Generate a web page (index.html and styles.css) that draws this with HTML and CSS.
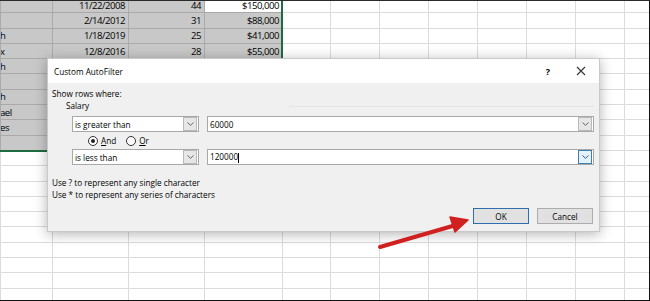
FILE: index.html
```html
<!DOCTYPE html>
<html>
    <head>
        <meta charset="UTF-8">
        <title>Custom AutoFilter</title>
        <link rel="stylesheet" href="styles.css">
    </head>
    <body>
        <div class="frame">
            <!--工作表-->
            <table class="sheet">
                <colgroup>
                    <col class="ca"><col class="cb"><col class="cb"><col class="cd"><col class="ce">
                    <col class="cx"><col class="cx"><col class="cx"><col class="cx"><col class="cx"><col class="cx"><col class="cx">
                </colgroup>
                <tr class="sel"><td></td><td class="num">11/22/2008</td><td class="num">44</td><td class="num cur">$150,000</td><td></td><td></td><td></td><td></td><td></td><td></td><td></td><td></td></tr>
                <tr class="sel"><td></td><td class="num">2/14/2012</td><td class="num">31</td><td class="num">$88,000</td><td></td><td></td><td></td><td></td><td></td><td></td><td></td><td></td></tr>
                <tr class="sel"><td class="name">h</td><td class="num">1/18/2019</td><td class="num">25</td><td class="num">$41,000</td><td></td><td></td><td></td><td></td><td></td><td></td><td></td><td></td></tr>
                <tr class="sel"><td class="name">x</td><td class="num">12/8/2016</td><td class="num">28</td><td class="num">$55,000</td><td></td><td></td><td></td><td></td><td></td><td></td><td></td><td></td></tr>
                <tr class="sel"><td class="name">h</td><td></td><td></td><td></td><td></td><td></td><td></td><td></td><td></td><td></td><td></td><td></td></tr>
                <tr class="sel"><td></td><td></td><td></td><td></td><td></td><td></td><td></td><td></td><td></td><td></td><td></td><td></td></tr>
                <tr class="sel"><td class="name">h</td><td></td><td></td><td></td><td></td><td></td><td></td><td></td><td></td><td></td><td></td><td></td></tr>
                <tr class="sel"><td class="name">ael</td><td></td><td></td><td></td><td></td><td></td><td></td><td></td><td></td><td></td><td></td><td></td></tr>
                <tr class="sel"><td class="name">es</td><td></td><td></td><td></td><td></td><td></td><td></td><td></td><td></td><td></td><td></td><td></td></tr>
                <tr class="sel"><td></td><td></td><td></td><td></td><td></td><td></td><td></td><td></td><td></td><td></td><td></td><td></td></tr>
                <tr><td></td><td></td><td></td><td></td><td></td><td></td><td></td><td></td><td></td><td></td><td></td><td></td></tr>
                <tr><td></td><td></td><td></td><td></td><td></td><td></td><td></td><td></td><td></td><td></td><td></td><td></td></tr>
                <tr><td></td><td></td><td></td><td></td><td></td><td></td><td></td><td></td><td></td><td></td><td></td><td></td></tr>
                <tr><td></td><td></td><td></td><td></td><td></td><td></td><td></td><td></td><td></td><td></td><td></td><td></td></tr>
                <tr><td></td><td></td><td></td><td></td><td></td><td></td><td></td><td></td><td></td><td></td><td></td><td></td></tr>
                <tr><td></td><td></td><td></td><td></td><td></td><td></td><td></td><td></td><td></td><td></td><td></td><td></td></tr>
                <tr><td></td><td></td><td></td><td></td><td></td><td></td><td></td><td></td><td></td><td></td><td></td><td></td></tr>
                <tr><td></td><td></td><td></td><td></td><td></td><td></td><td></td><td></td><td></td><td></td><td></td><td></td></tr>
                <tr><td></td><td></td><td></td><td></td><td></td><td></td><td></td><td></td><td></td><td></td><td></td><td></td></tr>
                <tr><td></td><td></td><td></td><td></td><td></td><td></td><td></td><td></td><td></td><td></td><td></td><td></td></tr>
            </table>
            <!--选区边框-->
            <div class="selbox"></div>

            <!--自定义筛选对话框-->
            <div class="dialog">
                <div class="titlebar">
                    <span class="title">Custom AutoFilter</span>
                    <span class="help">?</span>
                    <span class="close">
                        <svg width="10" height="10" viewBox="0 0 10 10"><path d="M1 1L9 9M9 1L1 9" stroke="#333" stroke-width="1.1" fill="none"/></svg>
                    </span>
                </div>
                <div class="body">
                    <p class="lbl">Show rows where:</p>
                    <div class="group"><span>Salary</span></div>
                    <div class="crit">
                        <div class="combo op">
                            <span class="txt">is greater than</span>
                            <span class="dd"><svg width="7" height="4" viewBox="0 0 7 4"><path d="M0.5 0.5L3.5 3.3L6.5 0.5" stroke="#666" fill="none"/></svg></span>
                        </div>
                        <div class="combo val">
                            <span class="txt">60000</span>
                            <span class="dd"><svg width="7" height="4" viewBox="0 0 7 4"><path d="M0.5 0.5L3.5 3.3L6.5 0.5" stroke="#666" fill="none"/></svg></span>
                        </div>
                    </div>
                    <div class="logic">
                        <label class="opt"><span class="radio on"></span><span><u>A</u>nd</span></label>
                        <label class="opt"><span class="radio"></span><span><u>O</u>r</span></label>
                    </div>
                    <div class="crit">
                        <div class="combo op">
                            <span class="txt">is less than</span>
                            <span class="dd"><svg width="7" height="4" viewBox="0 0 7 4"><path d="M0.5 0.5L3.5 3.3L6.5 0.5" stroke="#666" fill="none"/></svg></span>
                        </div>
                        <div class="combo val focus">
                            <span class="txt">120000<i class="caret"></i></span>
                            <span class="dd"><svg width="7" height="4" viewBox="0 0 7 4"><path d="M0.5 0.5L3.5 3.3L6.5 0.5" stroke="#2a5d8f" fill="none"/></svg></span>
                        </div>
                    </div>
                    <p class="hint">Use ? to represent any single character</p>
                    <p class="hint">Use * to represent any series of characters</p>
                    <div class="btns">
                        <button class="btn ok">OK</button>
                        <button class="btn">Cancel</button>
                    </div>
                </div>
            </div>

            <!--红色箭头-->
            <svg class="arrow" width="650" height="301" viewBox="0 0 650 301">
                <line x1="380" y1="247" x2="456" y2="225" stroke="#d0201f" stroke-width="4" stroke-linecap="round"/>
                <polygon points="468,220 450,217 455,232" fill="#d0201f" stroke="#d0201f" stroke-width="1.5" stroke-linejoin="round"/>
            </svg>
        </div>
    </body>
</html>
```
FILE: styles.css
```css
body{margin:0;background:#fff;}
p{margin:0;}
.frame{
    position:relative;
    width:650px;
    height:301px;
    box-sizing:border-box;
    border-top:1px solid #2a2a2a;
    border-right:1px solid #111;
    border-bottom:1px solid #111;
    overflow:hidden;
    background:#fff;
}
/*工作表*/
.sheet{
    border-collapse:collapse;
    table-layout:fixed;
    width:673px;
    margin-top:-4px;
    font-family:"Open Sans","Liberation Sans",sans-serif;
    font-size:9.6px;
    font-weight:500;
    letter-spacing:-0.5px;
    color:#000;
}
.sheet .ca{width:52px;}
.sheet .cb{width:76px;}
.sheet .cd{width:78px;}
.sheet .ce{width:48px;}
.sheet .cx{width:49px;}
.sheet tr{height:15.3px;}
.sheet td{
    padding:1px 3px 0;
    border:1px solid #dcdcdc;
    line-height:10px;
    white-space:nowrap;
    overflow:hidden;
}
.sheet tr.sel td:nth-child(-n+4){
    background:#c8c8c8;
    border-color:#aaaaaa;
}
.sheet tr.sel td.cur{background:#fff;}
.sheet td.num{text-align:right;}
.sheet td.name{padding-left:0;text-indent:-1px;}
.selbox{
    position:absolute;
    left:-2px;
    top:-2px;
    width:283px;
    height:151px;
    border-right:2px solid #1e6b40;
    border-bottom:2px solid #1e6b40;
}
/*对话框*/
.dialog{
    position:absolute;
    left:47px;
    top:57px;
    width:553px;
    background:#f0f0f0;
    border:1px solid #c9c9c9;
    box-sizing:border-box;
    box-shadow:0 2px 12px rgba(0,0,0,.3);
    font-family:"Open Sans","Liberation Sans",sans-serif;
    font-size:8.2px;
    font-weight:500;
    color:#000;
}
.titlebar{
    display:flex;
    align-items:center;
    height:24px;
    padding-left:6px;
    background:#fff;
}
.titlebar .title{flex:1;}
.titlebar .help{
    width:12px;
    text-align:center;
    font-weight:bold;
    font-size:9px;
    margin-right:22px;
}
.titlebar .close{
    display:flex;
    width:10px;
    margin-right:13px;
}
.body{
    padding:5px 5px 7px 4px;
}
.body .lbl{line-height:12px;}
.body .group{
    display:flex;
    align-items:center;
    padding-left:14px;
    line-height:12px;
}
.body .group::after{
    content:"";
    flex:1;
    margin-left:200px;
    border-top:1px solid #e4e4e4;
}
.crit{
    display:flex;
    gap:8px;
    margin-top:4px;
    padding-left:20px;
    height:16px;
}
.logic + .crit{margin-top:0;}
.crit + .hint{margin-top:12px;}
.combo{
    display:flex;
    align-items:center;
    background:#fff;
    border:1px solid #a8a8a8;
    box-sizing:border-box;
}
.combo .txt{flex:1;padding-left:2px;white-space:nowrap;}
.combo.op{width:127px;}
.combo.val{flex:1;}
.combo .dd{
    display:flex;
    align-items:center;
    justify-content:center;
    width:12px;
    height:12px;
    margin-right:1px;
    background:#e6e6e6;
    border:1px solid #b9b9b9;
}
.combo.focus .dd{
    background:#e5f1fb;
    border-color:#3c7fb1;
}
.caret{
    display:inline-block;
    width:1px;
    height:10px;
    vertical-align:middle;
    background:#000;
}
.logic{
    display:flex;
    align-items:center;
    gap:10px;
    height:17px;
    padding-left:36px;
}
.opt{display:flex;align-items:center;gap:3px;}
.radio{
    position:relative;
    width:8px;
    height:8px;
    border:1px solid #333;
    border-radius:50%;
    background:#fff;
}
.radio.on::after{
    content:"";
    position:absolute;
    left:2px;
    top:2px;
    width:4px;
    height:4px;
    border-radius:50%;
    background:#222;
}
.hint{line-height:12px;}
.btns{
    display:flex;
    justify-content:flex-end;
    gap:8px;
    margin-top:7px;
    padding-right:1px;
}
.btn{
    width:56px;
    height:16px;
    padding:0;
    background:#e1e1e1;
    border:1px solid #adadad;
    font-family:"Open Sans","Liberation Sans",sans-serif;
    font-size:8.2px;
    font-weight:500;
    color:#000;
}
.btn.ok{
    border:1.5px solid #2f6fad;
}
.arrow{
    position:absolute;
    left:0;
    top:-1px;
}
```
